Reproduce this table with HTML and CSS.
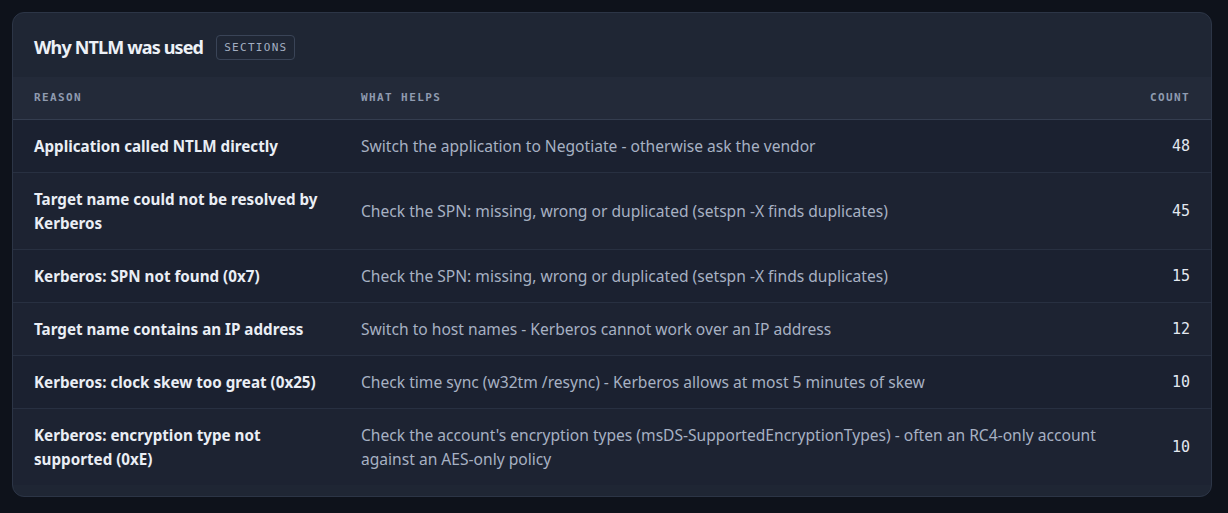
FILE: index.html
```html
<!DOCTYPE html>
<html lang="en">
<head>
<meta charset="utf-8">
<title>Why NTLM was used</title>
<link rel="stylesheet" href="styles.css">
</head>
<body>
<section class="card">
  <header class="card-head">
    <h2 class="title">Why NTLM was used</h2>
    <span class="badge">SECTIONS</span>
  </header>
  <table class="tbl">
    <colgroup>
      <col class="c-reason">
      <col class="c-help">
      <col class="c-count">
    </colgroup>
    <thead>
      <tr>
        <th>REASON</th>
        <th>WHAT HELPS</th>
        <th class="num">COUNT</th>
      </tr>
    </thead>
    <tbody>
      <tr>
        <td class="reason">Application called NTLM directly</td>
        <td class="help">Switch the application to Negotiate - otherwise ask the vendor</td>
        <td class="num">48</td>
      </tr>
      <tr>
        <td class="reason">Target name could not be resolved by Kerberos</td>
        <td class="help">Check the SPN: missing, wrong or duplicated (setspn -X finds duplicates)</td>
        <td class="num">45</td>
      </tr>
      <tr>
        <td class="reason">Kerberos: SPN not found (0x7)</td>
        <td class="help">Check the SPN: missing, wrong or duplicated (setspn -X finds duplicates)</td>
        <td class="num">15</td>
      </tr>
      <tr>
        <td class="reason">Target name contains an IP address</td>
        <td class="help">Switch to host names - Kerberos cannot work over an IP address</td>
        <td class="num">12</td>
      </tr>
      <tr>
        <td class="reason">Kerberos: clock skew too great (0x25)</td>
        <td class="help">Check time sync (w32tm /resync) - Kerberos allows at most 5 minutes of skew</td>
        <td class="num">10</td>
      </tr>
      <tr>
        <td class="reason">Kerberos: encryption type not supported (0xE)</td>
        <td class="help">Check the account's encryption types (msDS-SupportedEncryptionTypes) - often an RC4-only account against an AES-only policy</td>
        <td class="num">10</td>
      </tr>
    </tbody>
  </table>
</section>
</body>
</html>
```

FILE: styles.css
```css
* { box-sizing: border-box; }

html, body {
  margin: 0;
  padding: 0;
  background: #0e121b;
}

body {
  padding: 12px 16px 16px 12px;
  font-family: "Noto Sans", "Open Sans", sans-serif;
  color: #e6ebf3;
}

.card {
  width: 1200px;
  background: #1f2634;
  border: 1px solid #2c3546;
  border-radius: 12px;
  overflow: hidden;
  padding-bottom: 11px;
}

.card-head {
  display: flex;
  align-items: center;
  gap: 13px;
  height: 64px;
  padding: 4px 21px 0;
}

.title {
  margin: 0;
  font-size: 18px;
  font-weight: 700;
  letter-spacing: -0.85px;
  color: #edf1f7;
}

.badge {
  display: inline-flex;
  align-items: center;
  height: 25px;
  padding: 0 6px 0 7px;
  border: 1px solid #3a4457;
  border-radius: 4px;
  font-family: "DejaVu Sans Mono", monospace;
  font-size: 11px;
  letter-spacing: 1.3px;
  color: #a3aec1;
}

.tbl {
  width: 100%;
  border-collapse: collapse;
  table-layout: fixed;
}

.c-reason { width: 327px; }
.c-count { width: 90px; }

.tbl th {
  height: 42px;
  padding: 0 22px 0 21px;
  text-align: left;
  background: #232a39;
  border-bottom: 1px solid #343d4f;
  font-family: "DejaVu Sans Mono", monospace;
  font-size: 11px;
  font-weight: 700;
  letter-spacing: 1.4px;
  color: #8f9bb0;
}

.tbl td {
  padding: 14px 22px 14px 21px;
  line-height: 24px;
  font-size: 15px;
  vertical-align: middle;
  background: #1b2130;
  border-bottom: 1px solid #283041;
}

.tbl tbody tr:nth-child(even) td { background: #1d2332; }

.tbl tbody tr:last-child td { border-bottom: 0; }

.tbl td.reason {
  padding-right: 12px;
  font-size: 15.2px;
  font-weight: 700;
  color: #eaeef5;
}

.tbl td.help {
  font-size: 15.6px;
  color: #a7b1c3;
}

.tbl th.num {
  text-align: right;
  padding-right: 21px;
}

.tbl td.num {
  text-align: right;
  padding-right: 21px;
  font-family: "DejaVu Sans Mono", monospace;
  font-size: 15px;
  color: #e3e8f0;
}
```
